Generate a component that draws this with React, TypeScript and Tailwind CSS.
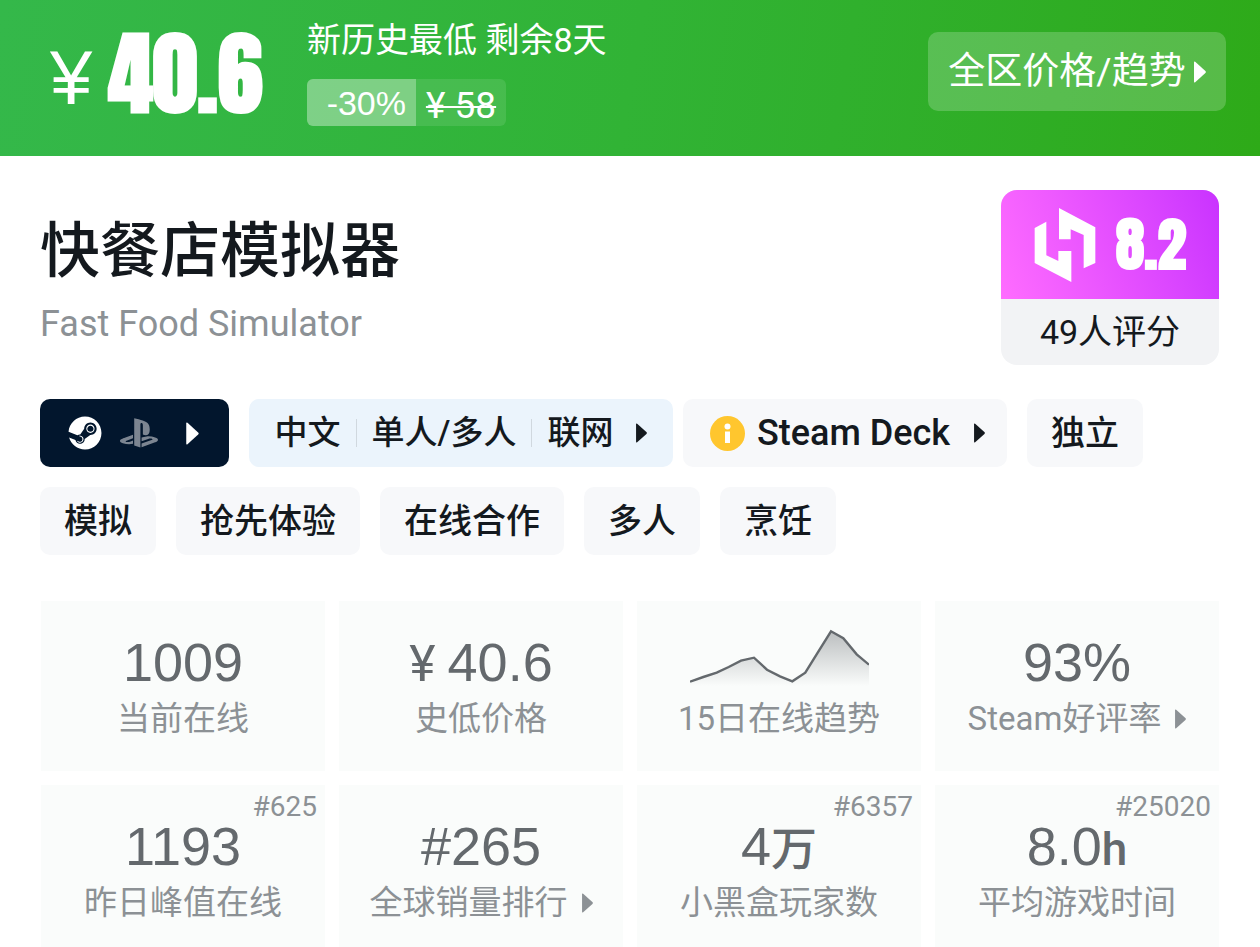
import type { ReactNode } from "react"
import { FaPlaystation, FaSteam } from "react-icons/fa"

type Stat = {
  prefix?: string
  value?: string
  suffix?: string
  label: string
  rank?: string
  link?: boolean
}

const stats: Stat[] = [
  { value: "1009", label: "当前在线" },
  { prefix: "¥", value: "40.6", label: "史低价格" },
  { label: "15日在线趋势" },
  { value: "93%", label: "Steam好评率", link: true },
  { value: "1193", label: "昨日峰值在线", rank: "#625" },
  { value: "#265", label: "全球销量排行", link: true },
  { value: "4", suffix: "万", label: "小黑盒玩家数", rank: "#6357" },
  { value: "8.0", suffix: "h", label: "平均游戏时间", rank: "#25020" },
]

const tags = ["独立", "模拟", "抢先体验", "在线合作", "多人", "烹饪"]

const trend =
  "0,52.7 13.3,48 26.7,43.7 38.7,38 51,31.7 64,28.7 77,40.7 90,47.3 102.3,52.3 115.3,43.7 127.7,23.7 141,2.3 153.3,9.3 166.7,25.3 179,35.7"

function Arrow({ className }: { className: string }) {
  return (
    <svg viewBox="0 0 12 22" className={className} fill="currentColor" aria-hidden>
      <path d="M0 1.4Q0 0 1.2 .8L11.4 10Q12.4 11 11.4 12L1.2 21.2Q0 22 0 20.6Z" />
    </svg>
  )
}

function TrendChart() {
  return (
    <svg viewBox="0 0 179 60" className="h-[60px] w-[179px]" role="img" aria-label="15日在线趋势">
      <defs>
        <linearGradient id="trend-fill" x1="0" y1="0" x2="0" y2="1">
          <stop offset="0" stopColor="#64696d" stopOpacity="0.42" />
          <stop offset="1" stopColor="#64696d" stopOpacity="0" />
        </linearGradient>
      </defs>
      <polygon points={`0,57 ${trend} 179,57`} fill="url(#trend-fill)" />
      <polyline points={trend} fill="none" stroke="#64696d" strokeWidth="2.4" />
    </svg>
  )
}

function Tag({ children }: { children: ReactNode }) {
  return (
    <a href="#tag" className="flex h-[68px] items-center rounded-[10px] bg-[#f7f8fa] px-6">
      {children}
    </a>
  )
}

function StatCard({ prefix, value, suffix, label, rank, link }: Stat) {
  return (
    <div className="relative flex h-[170px] flex-col items-center bg-[#fafcfb] pt-7">
      {rank && (
        <span className="absolute top-1 right-2 text-[28px] leading-9 text-[#8c9195]">{rank}</span>
      )}
      <div className="flex h-[68px] items-baseline font-['Liberation_Sans',sans-serif] text-[54px] leading-[66px] text-[#64696d]">
        {prefix && (
          <span className="pr-3 font-['Roboto',sans-serif] text-[50px]">{prefix}</span>
        )}
        {value ?? <TrendChart />}
        {suffix && (
          <span className="font-['Roboto','Noto_Sans_CJK_SC',sans-serif] text-[46px] font-medium">{suffix}</span>
        )}
      </div>
      {link ? (
        <a href="#detail" className="flex items-center gap-3.5 text-[33px] leading-[44px] text-[#8c9195]">
          {label}
          <Arrow className="h-5 w-[11px]" />
        </a>
      ) : (
        <p className="text-[33px] leading-[44px] text-[#8c9195]">{label}</p>
      )}
    </div>
  )
}

export default function App() {
  return (
    <div className="h-screen overflow-hidden bg-white font-['Roboto','Noto_Sans_CJK_SC',sans-serif] text-[#14191e]">
      {/* Price bar */}
      <header className="flex h-[156px] items-start justify-between bg-linear-100 from-[#34b84a] via-[#31b335] to-[#2eaa18] pr-[34px] pl-[50px] text-white">
        <div className="flex">
          <p className="flex w-[257px] items-start gap-4">
            <span className="pt-2 font-['Liberation_Sans',sans-serif] text-[76px] leading-[140px]">¥</span>
            <strong className="font-['Impact','Anton','Liberation_Sans',sans-serif] text-[90px] leading-[148px] font-black">
              40.6
            </strong>
          </p>
          <div className="pt-4">
            <p className="text-[34px] leading-[48px]">新历史最低 剩余8天</p>
            <p className="mt-[15px] flex h-[47px] w-[199px] overflow-hidden rounded-md bg-white/10">
              <span className="w-[109px] bg-white/30 pr-2.5 text-right font-['Liberation_Sans',sans-serif] text-[34px] leading-[48px]">
                -30%
              </span>
              <s className="flex-1 text-center text-[37px] leading-[54px] decoration-2">¥ 58</s>
            </p>
          </div>
        </div>
        <button className="mt-8 flex h-[79px] w-[298px] items-center justify-center gap-2 rounded-[10px] bg-white/20 text-[37px]">
          全区价格/趋势
          <Arrow className="h-[22px] w-3" />
        </button>
      </header>

      <main className="px-10">
        {/* Title and score */}
        <section className="flex justify-between pt-[34px]">
          <div>
            <h1 className="pt-[22px] text-[60px] leading-[80px] font-medium">快餐店模拟器</h1>
            <p className="pt-1.5 text-[36px] leading-[52px] text-[#8c9195]">Fast Food Simulator</p>
          </div>
          <div className="mr-px w-[218px] overflow-hidden rounded-2xl bg-[#f2f3f5]">
            <div className="flex h-[109px] items-center justify-center gap-5 bg-linear-70 from-[#ff6cff] via-[#e650ff] to-[#c932ff] text-white">
              <svg viewBox="165 82 182 222" className="h-[74px] w-[62px]" fill="currentColor" aria-hidden>
                <path d="M165 142L200 123V224L236 241V211H275V304L165 247Z" />
                <path d="M238 82L347 140V247L312 263V163L273 146V176H238Z" />
              </svg>
              <strong className="font-['Impact','Anton','Liberation_Sans',sans-serif] text-[58px] leading-[80px] font-black">
                8.2
              </strong>
            </div>
            <p className="text-center text-[34px] leading-[66px]">49人评分</p>
          </div>
        </section>

        {/* Platforms, features and genre tags */}
        <nav className="mt-[34px] flex flex-wrap gap-5 text-[34px] font-medium">
          <a href="#platforms" aria-label="平台" className="flex h-[68px] w-[189px] items-center rounded-[10px] bg-[#02162d] pl-7 text-white">
            <FaSteam className="size-[34px]" />
            <FaPlaystation className="ml-[18px] h-[34px] w-[38px] text-[#7c8591]" />
            <Arrow className="ml-7 h-[23px] w-[13px]" />
          </a>
          <div className="flex gap-2.5">
            <a href="#features" className="flex h-[68px] w-[424px] items-center justify-center gap-[15px] rounded-[10px] bg-[#ebf4fc] text-[33px]">
              中文
              <i className="h-7 w-px bg-[#d0d8df]" />
              单人/多人
              <i className="h-7 w-px bg-[#d0d8df]" />
              联网
              <Arrow className="ml-2 h-5 w-[11px]" />
            </a>
            <a href="#deck" className="flex h-[68px] w-[324px] items-center rounded-[10px] bg-[#f7f8fa] pl-[27px]">
              <svg viewBox="0 0 35 35" className="size-[35px]" aria-hidden>
                <circle cx="17.5" cy="17.5" r="17.5" fill="#ffc62e" />
                <circle cx="17.5" cy="10.5" r="3" fill="#fff" />
                <rect x="15" y="15.5" width="5" height="11.5" fill="#fff" />
              </svg>
              <span className="pl-3 text-[36px]">Steam Deck</span>
              <Arrow className="ml-6 h-5 w-[11px]" />
            </a>
          </div>
          {tags.map((tag) => (
            <Tag key={tag}>{tag}</Tag>
          ))}
        </nav>

        {/* Stats */}
        <section className="mt-[46px] mr-px ml-px grid grid-cols-4 gap-3.5">
          {stats.map((stat) => (
            <StatCard key={stat.label} {...stat} />
          ))}
        </section>
      </main>
    </div>
  )
}
